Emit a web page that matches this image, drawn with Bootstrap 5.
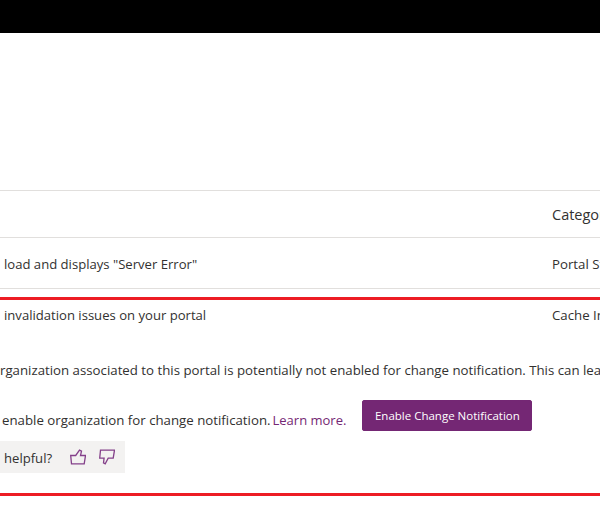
<!DOCTYPE html>
<html lang="en">
<head>
<meta charset="utf-8">
<title>Portal checker</title>
<link href="https://cdn.jsdelivr.net/npm/bootstrap@5.3.0/dist/css/bootstrap.min.css" rel="stylesheet">
<style>
html,body{height:507px;overflow:hidden;background:#fff}
body{font-family:"Open Sans","Noto Sans",sans-serif;font-size:13.25px;line-height:20px;color:#323130}
.topbar{height:33px;background:#000}
.sheet{margin-top:157px;white-space:nowrap}
.grow{display:flex;align-items:center;border-top:1px solid #e1dfdd}
.cell-a{width:552px;flex:none}
.cell-inset{padding-left:4px;font-size:13.1px}
.head-row{height:47px;font-size:14.5px;padding-top:2px}
.item-row{height:52px;border-bottom:1px solid #e1dfdd;padding-top:1px}
.issue{margin-top:8px;border-top:3px solid #ed1c24;border-bottom:3px solid #ed1c24;height:199px}
.issue-title{display:flex;height:30px;align-items:center}
.detail{margin-top:30px}
.action-line{display:flex;align-items:flex-start;margin-top:20px;padding-left:2px}
.action-text{margin-top:10px}
.learn{color:#742774;text-decoration:none;margin-left:2px;font-size:13px}
.btn-enable{background:#742774;border-color:#742774;color:#fff;font-size:11.5px;height:31px;width:170px;padding:0;margin-left:16px;border-radius:2px;line-height:29px}
.btn-enable:hover{background:#742774;color:#fff}
.ask{display:inline-flex;align-items:center;background:#f3f2f1;height:32px;margin-top:10px;padding:1px 10px 0 4px;font-size:13.1px}
.ask svg{display:block;margin-top:-1px}
.ask-icon{margin-left:18px}
.ask-icon+.ask-icon{margin-left:13px}
</style>
</head>
<body>
<div class="topbar"></div>
<div class="sheet">
  <div class="grow head-row"><div class="cell-a"></div><div>Category</div></div>
  <div class="grow item-row"><div class="cell-a cell-inset">load and displays "Server Error"</div><div>Portal Status</div></div>
  <div class="issue">
    <div class="issue-title"><div class="cell-a cell-inset">invalidation issues on your portal</div><div>Cache Invalidation</div></div>
    <div class="detail">rganization associated to this portal is potentially not enabled for change notification. This can lead to</div>
    <div class="action-line"><span class="action-text">enable organization for change notification.</span><a class="learn action-text" href="#">Learn more.</a><button type="button" class="btn btn-enable">Enable Change Notification</button></div>
    <div class="ask">helpful?
      <svg class="ask-icon" width="16" height="16" viewBox="0 0 16 16" fill="none" stroke="#84408a" stroke-width="1.3"><path d="M.7 6.5h5L9.5 1.2l2 1-1 4.3h5l-1.3 8.3H1.5z"/></svg>
      <svg class="ask-icon" width="16" height="16" viewBox="0 0 16 16" fill="none" stroke="#84408a" stroke-width="1.3"><path d="M1.5 1.2h14l-1.3 8h-5l-3 5.6-1.7-1 .6-4.6H.7z"/></svg>
    </div>
  </div>
</div>
<script src="https://cdn.jsdelivr.net/npm/bootstrap@5.3.0/dist/js/bootstrap.bundle.min.js"></script>
</body>
</html>
